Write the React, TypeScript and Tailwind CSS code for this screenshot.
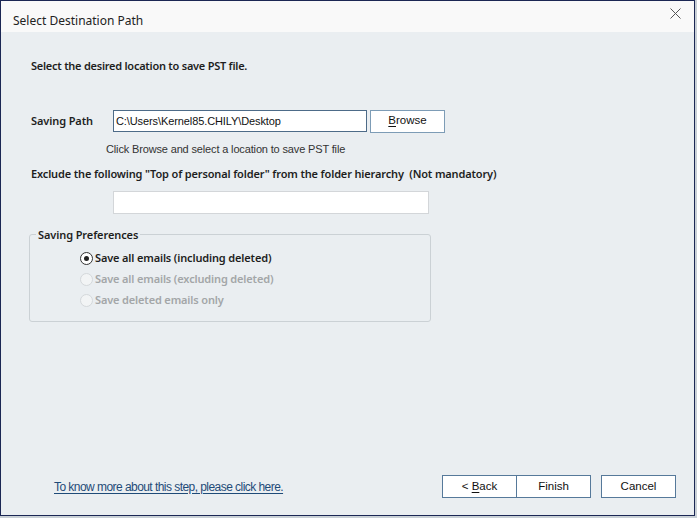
import type { ReactNode } from "react"

const ui = "font-['Noto_Sans',_'Open_Sans',_sans-serif]"
const classic = "font-['Liberation_Sans',_Arial,_sans-serif]"

function Radio({ checked, disabled, children }: { checked?: boolean; disabled?: boolean; children: ReactNode }) {
  return (
    <label className="flex h-[21px] items-center gap-[2px]">
      <span
        className={`flex h-[13px] w-[13px] items-center justify-center rounded-full border ${
          disabled ? "border-[#d4d8db] bg-[#f2f4f5]" : "border-[#333] bg-white"
        }`}
      >
        {checked ? <span className="h-[5px] w-[5px] rounded-full bg-[#222]" /> : null}
      </span>
      <span
        className={`text-[11px] font-semibold tracking-[-0.15px] ${disabled ? "text-[#a3a6a8]" : "text-[#1e1e1e]"}`}
      >
        {children}
      </span>
    </label>
  )
}

function WinButton({ children, className = "" }: { children: ReactNode; className?: string }) {
  return (
    <button
      className={`flex h-[23px] w-[75px] items-center justify-center border border-[#56799a] bg-white text-[11.5px] text-[#111] ${classic} ${className}`}
    >
      <span className="whitespace-pre">{children}</span>
    </button>
  )
}

export default function App() {
  return (
    <div className={`h-[518px] w-[697px] bg-[#c9d0d6] ${ui}`}>
      <div className="flex h-[516px] w-[695px] flex-col border-[1.5px] border-[#1b2754] bg-[#eaeef1]">
        <div className="flex h-[31px] shrink-0 items-start justify-between bg-[#f9f9f9] pl-[12px] pr-[13px] pt-[12px]">
          <span className="text-[12px] leading-[16px] text-[#222]">Select Destination Path</span>
          <svg width="11" height="11" viewBox="0 0 11 11" className="mt-[-5px]">
            <path d="M0.5 0.5 L10.5 10.5 M10.5 0.5 L0.5 10.5" stroke="#555" strokeWidth="1" fill="none" />
          </svg>
        </div>

        <div className="flex flex-1 flex-col pl-[30px] pr-[10px]">
          <p className="mt-[26px] text-[11px] font-semibold tracking-[-0.25px] text-[#1e1e1e]">
            Select the desired location to save PST file.
          </p>

          <div className="mt-[35px] flex items-center">
            <span className="w-[82px] text-[11px] font-semibold tracking-[-0.1px] text-[#1e1e1e]">Saving Path</span>
            <div
              className={`flex h-[22px] w-[254px] items-center border border-[#4d6b88] bg-white px-[2px] text-[11px] tracking-[-0.1px] text-[#111] ${classic}`}
            >
              {"C:\\Users\\Kernel85.CHILY\\Desktop"}
            </div>
            <button
              className={`ml-[3px] flex h-[23px] w-[75px] items-center justify-center border border-[#7d9cb6] bg-white text-[11.5px] text-[#111] ${classic}`}
            >
              <span>
                <span className="underline underline-offset-2">B</span>rowse
              </span>
            </button>
          </div>

          <p className={`ml-[75px] mt-[8px] text-[11px] tracking-[-0.15px] text-[#333] ${classic}`}>
            Click Browse and select a location to save PST file
          </p>

          <p className="mt-[9px] text-[11px] font-semibold tracking-[-0.15px] text-[#1e1e1e]">
            Exclude the following "Top of personal folder" from the folder hierarchy&nbsp; (Not mandatory)
          </p>

          <div className="ml-[82px] mt-[8px] h-[23px] w-[316px] border border-[#d3d6d9] bg-white" />

          <fieldset className="ml-[-2px] mt-[13px] h-[95px] w-[402px] rounded-[3px] border border-[#cbd1d5] px-[6px] pb-0 pt-[6px]">
            <legend className="px-[2px] text-[11px] font-semibold tracking-[-0.1px] text-[#1e1e1e]">
              Saving Preferences
            </legend>
            <div className="ml-[44px] mt-[-1px] flex flex-col">
              <Radio checked>Save all emails (including deleted)</Radio>
              <Radio disabled>Save all emails (excluding deleted)</Radio>
              <Radio disabled>Save deleted emails only</Radio>
            </div>
          </fieldset>

          <div className="mt-auto mb-[17px] flex items-center">
            <a
              href="#"
              className={`ml-[23px] text-[12px] tracking-[-0.55px] text-[#1f4b78] underline underline-offset-2 ${classic}`}
            >
              To know more about this step, please click here.
            </a>
            <div className="ml-auto flex">
              <WinButton>
                {"< "}
                <span className="underline underline-offset-2">B</span>ack
              </WinButton>
              <WinButton className="ml-[-1px]">Finish</WinButton>
              <WinButton className="ml-[10px] mr-[8px]">Cancel</WinButton>
            </div>
          </div>
        </div>
      </div>
    </div>
  )
}
